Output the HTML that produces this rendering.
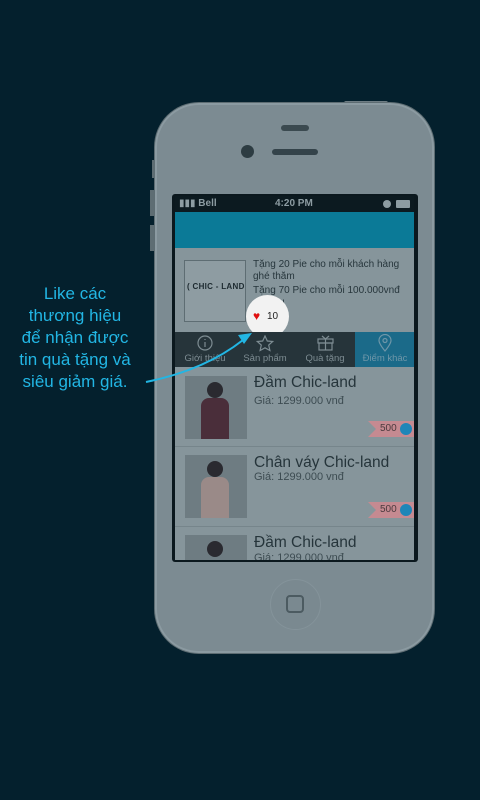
<!DOCTYPE html><html><head><meta charset="utf-8"><style>
*{margin:0;padding:0;box-sizing:border-box}
body{width:480px;height:800px;background:#04202d;position:relative;overflow:hidden;font-family:"Liberation Sans","DejaVu Sans",sans-serif}
.a{position:absolute}
.phone{left:155px;top:103px;width:279px;height:550px;border-radius:44px;background:#7c8b92;border:2px solid #8b9aa1;box-shadow:0 0 0 1px #5d6c72}
.scr{left:172px;top:194px;width:246px;height:368px;background:#0b181e;border-radius:3px}
.txt{color:#27363c;font-size:10px;white-space:nowrap}
.tab{top:332px;height:35px;width:60px;text-align:center;color:#7d8c92;font-size:9.5px}
.tab span{position:absolute;left:0;right:0;top:21px}
.item{left:175px;width:239px;background:#86959b;border-bottom:1px solid #76858b}
.img{left:10px;top:9px;width:62px;height:63px;background:#6e7c82;overflow:hidden}
.img b{position:absolute;left:22px;top:6px;width:16px;height:16px;border-radius:50%;background:#2a2a30}
.img u{position:absolute;left:16px;top:22px;width:28px;height:45px;border-radius:8px 8px 0 0;background:#4a2e3a}
.ti{left:79px;font-size:15.5px;color:#26353b}
.pr{left:79px;font-size:11px;color:#3d4c52}
.rib{left:193px;width:46px;height:16px;background:#c58a91;clip-path:polygon(0 0,100% 0,100% 100%,0 100%,8px 50%);font-size:10px;color:#4a3a3e;padding-left:12px;line-height:16px}
.rib i{position:absolute;right:2px;top:2px;width:12px;height:12px;border-radius:50%;background:#1f86b8}
</style></head><body>
<div class="a" style="left:152px;top:160px;width:4px;height:18px;background:#5e6d73"></div>
<div class="a" style="left:150px;top:190px;width:5px;height:26px;background:#5e6d73"></div>
<div class="a" style="left:150px;top:225px;width:5px;height:26px;background:#5e6d73"></div>
<div class="a" style="left:344px;top:101px;width:44px;height:4px;background:#6d7c83;border-radius:2px"></div>
<div class="a phone"></div>
<div class="a" style="left:281px;top:125px;width:28px;height:6px;border-radius:3px;background:#3b4a50"></div>
<div class="a" style="left:272px;top:149px;width:46px;height:6px;border-radius:3px;background:#34434a"></div>
<div class="a" style="left:241px;top:145px;width:13px;height:13px;border-radius:50%;background:#2d3c42"></div>
<div class="a" style="left:270px;top:579px;width:51px;height:51px;border-radius:50%;background:#7a8990;border:1px solid #84939a"></div>
<div class="a" style="left:286px;top:595px;width:18px;height:18px;border-radius:4px;border:2px solid #4c5b61"></div>
<div class="a scr"></div>
<div class="a" style="left:175px;top:196px;width:239px;height:16px;background:#0c1a20;color:#8d9ca2;font-size:10px;font-weight:bold">
<span class="a" style="left:4px;top:2px">▮▮▮ Bell</span><span class="a" style="left:100px;top:2px">4:20 PM</span>
<span class="a" style="left:208px;top:4px;width:8px;height:8px;border-radius:50%;background:#8d9ca2"></span>
<span class="a" style="left:221px;top:4px;width:14px;height:8px;background:#8d9ca2;border-radius:1px"></span></div>
<div class="a" style="left:175px;top:212px;width:239px;height:36px;background:#0b7a97"></div>
<div class="a" style="left:175px;top:248px;width:239px;height:84px;background:#86959b"></div>
<div class="a" style="left:184px;top:260px;width:62px;height:62px;background:#8e9ca2;border:1px solid #5e6d73"></div>
<div class="a" style="left:187px;top:282px;font-size:8px;font-weight:bold;color:#1d2a30;letter-spacing:.3px">( CHIC - LAND</div>
<div class="a txt" style="left:253px;top:259px">Tặng 20 Pie cho mỗi khách hàng</div>
<div class="a txt" style="left:253px;top:271px">ghé thăm</div>
<div class="a txt" style="left:253px;top:285px">Tặng 70 Pie cho mỗi 100.000vnđ</div>
<div class="a txt" style="left:253px;top:297px">chi tiêu</div>
<div class="a" style="left:246px;top:295px;width:43px;height:43px;border-radius:50%;background:#f2f2f2;clip-path:inset(0 0 6px 0)"></div>
<div class="a" style="left:253px;top:309px;font-size:12px;color:#e01010">♥</div>
<div class="a" style="left:267px;top:311px;font-size:10px;color:#222">10</div>
<div class="a" style="left:175px;top:332px;width:239px;height:35px;background:#26343a"></div>
<div class="a" style="left:355px;top:332px;width:59px;height:35px;background:#1b6a89"></div>
<div class="a tab" style="left:175px"><svg class="a" style="left:22px;top:3px" width="16" height="16" viewBox="0 0 16 16" fill="none" stroke="#7d8c92" stroke-width="1.2"><circle cx="8" cy="8" r="7"/><path d="M8 4v1M8 7v5"/></svg><span>Giới thiệu</span></div>
<div class="a tab" style="left:235px"><svg class="a" style="left:21px;top:3px" width="18" height="17" viewBox="0 0 18 17" fill="none" stroke="#7d8c92" stroke-width="1.2"><path d="M9 1l2.3 5 5.4.5-4 3.6 1.2 5.4L9 12.8 4.1 15.5l1.2-5.4-4-3.6 5.4-.5z"/></svg><span>Sản phẩm</span></div>
<div class="a tab" style="left:295px"><svg class="a" style="left:22px;top:3px" width="17" height="16" viewBox="0 0 17 16" fill="none" stroke="#7d8c92" stroke-width="1.2"><rect x="1" y="4" width="15" height="4"/><rect x="2" y="8" width="13" height="7"/><path d="M8.5 4v11M5 1l3.5 3L12 1"/></svg><span>Quà tặng</span></div>
<div class="a tab" style="left:355px"><svg class="a" style="left:23px;top:2px" width="14" height="18" viewBox="0 0 14 18" fill="none" stroke="#6e96a8" stroke-width="1.2"><path d="M7 17S1 10 1 6.5a6 6 0 0112 0C13 10 7 17 7 17z"/><circle cx="7" cy="6.5" r="2"/></svg><span style="color:#6e96a8">Điểm khác</span></div>
<div class="a item" style="top:367px;height:80px"><div class="a img"><b></b><u></u></div><div class="a ti" style="top:7px">Đầm Chic-land</div><div class="a pr" style="top:28px">Giá: 1299.000 vnđ</div><div class="a rib" style="top:54px">500<i></i></div></div>
<div class="a item" style="top:447px;height:80px"><div class="a img" style="top:8px"><b></b><u style="background:#9a8a88"></u></div><div class="a ti" style="top:7px">Chân váy Chic-land</div><div class="a pr" style="top:24px">Giá: 1299.000 vnđ</div><div class="a rib" style="top:55px">500<i></i></div></div>
<div class="a item" style="top:527px;height:33px;border:0;overflow:hidden"><div class="a img" style="top:8px"><b></b></div><div class="a ti" style="top:7px">Đầm Chic-land</div><div class="a pr" style="top:25px">Giá: 1299.000 vnđ</div></div>
<div class="a" style="left:0;top:283px;width:150px;text-align:center;color:#22b6e4;font-size:17px;line-height:22px">Like các<br>thương hiệu<br>để nhận được<br>tin quà tặng và<br>siêu giảm giá.</div>
<svg class="a" style="left:0;top:0" width="480" height="800"><path d="M146 382 Q205 370 243 340" fill="none" stroke="#22b6e4" stroke-width="2"/><path d="M252 333 l-14 2 6 9z" fill="#22b6e4"/></svg>
</body></html>
